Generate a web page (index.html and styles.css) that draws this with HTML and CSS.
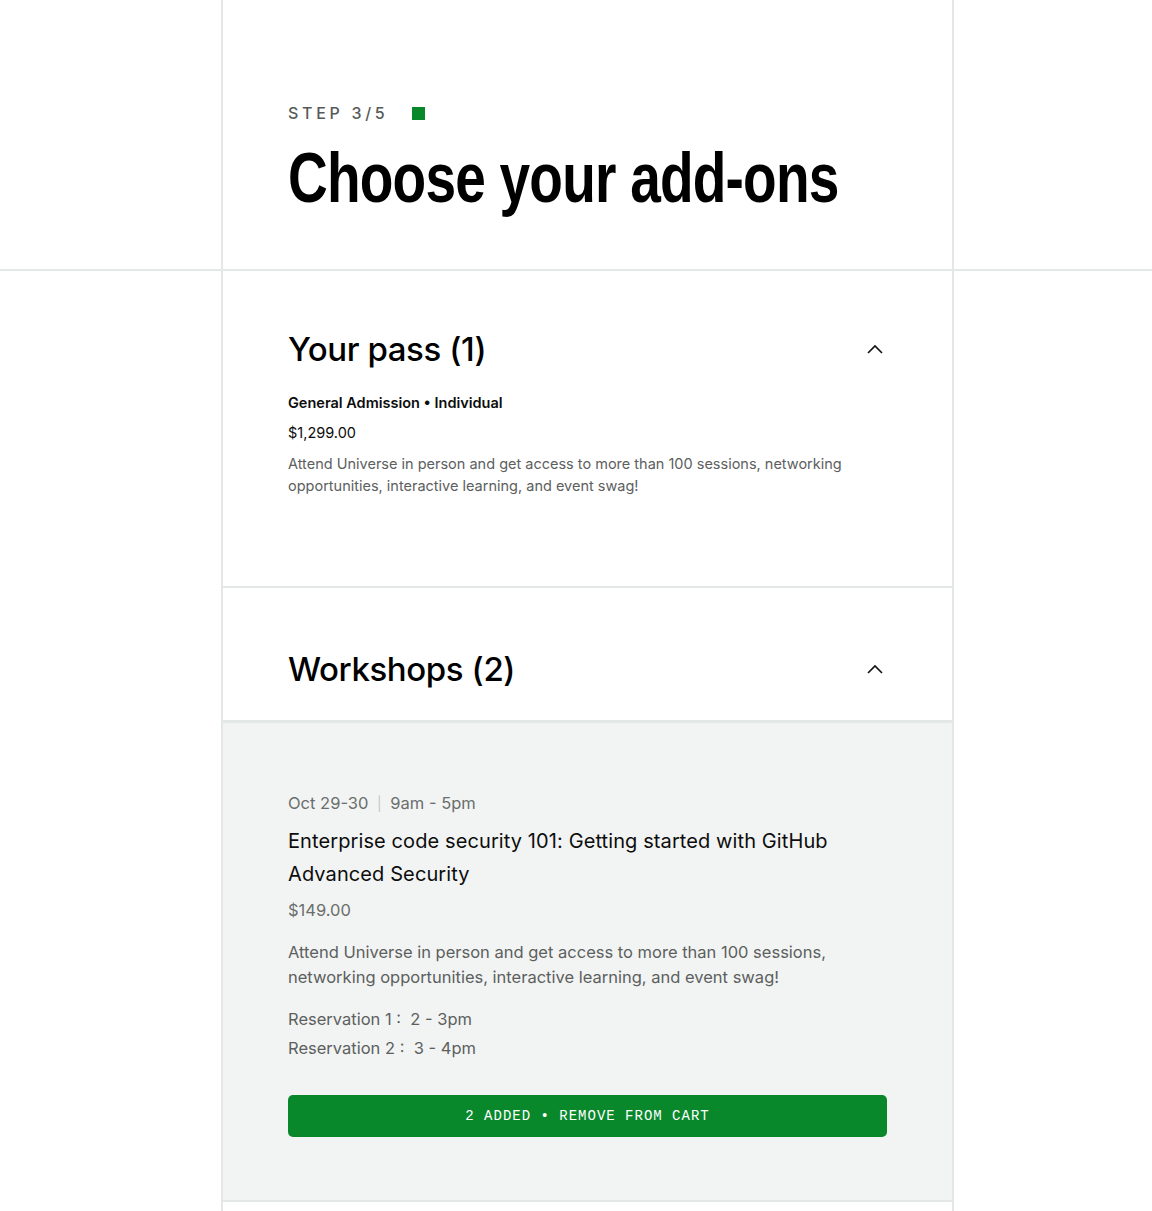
FILE: index.html
```html
<!DOCTYPE html>
<html lang="en">
<head>
<meta charset="utf-8">
<title>Choose your add-ons</title>
<link rel="stylesheet" href="styles.css">
</head>
<body>
<header class="top">
  <div class="col top-col">
    <div class="step"><span class="step-text">STEP 3/5</span><span class="step-dot"></span></div>
    <h1 class="title"><span class="title-inner">Choose your add-ons</span></h1>
  </div>
</header>
<main class="col main-col">
  <section class="panel pass">
    <div class="panel-head">
      <h2 class="panel-title">Your pass (1)</h2>
      <svg class="chev" width="16" height="10" viewBox="0 0 16 10"><path d="M1 9 L8 2 L15 9" fill="none" stroke="#111" stroke-width="1.6"/></svg>
    </div>
    <p class="pass-name">General Admission • Individual</p>
    <p class="pass-price">$1,299.00</p>
    <p class="pass-desc">Attend Universe in person and get access to more than 100 sessions, networking opportunities, interactive learning, and event swag!</p>
  </section>
  <section class="panel ws-head">
    <div class="panel-head">
      <h2 class="panel-title">Workshops (2)</h2>
      <svg class="chev" width="16" height="10" viewBox="0 0 16 10"><path d="M1 9 L8 2 L15 9" fill="none" stroke="#111" stroke-width="1.6"/></svg>
    </div>
  </section>
  <section class="ws-body">
    <p class="ws-date">Oct 29-30 <span class="sep">|</span> 9am - 5pm</p>
    <h3 class="ws-title">Enterprise code security 101: Getting started with GitHub Advanced Security</h3>
    <p class="ws-price">$149.00</p>
    <p class="ws-desc">Attend Universe in person and get access to more than 100 sessions, networking opportunities, interactive learning, and event swag!</p>
    <div class="res">
      <p>Reservation 1 :&nbsp; 2 - 3pm</p>
      <p>Reservation 2 :&nbsp; 3 - 4pm</p>
    </div>
    <button class="cart-btn">2 ADDED • REMOVE FROM CART</button>
  </section>
  <section class="panel tail"></section>
</main>
</body>
</html>
```
FILE: styles.css
```css
* { box-sizing: border-box; }
html, body { margin: 0; padding: 0; background: #fff; }
body {
  font-family: "Inter", "Noto Sans", sans-serif;
  color: #0d0d0d;
  height: 1211px;
  overflow: hidden;
}
p, h1, h2, h3 { margin: 0; }

.col {
  width: 733px;
  margin-left: 221px;
  border-left: 2px solid #e3e8e6;
  border-right: 2px solid #e3e8e6;
}
.top { border-bottom: 2px solid #e3e8e6; }
.top-col {
  height: 269px;
  padding: 102px 65px 0 65px;
}
.step {
  display: flex;
  align-items: center;
  gap: 24px;
  height: 22px;
}
.step-text {
  font-family: "Inter", sans-serif;
  font-size: 16px;
  letter-spacing: 3.7px;
  color: #555a58;
  font-weight: 500;
}
.step-dot { width: 13px; height: 13px; background: #08872b; }
.title {
  font-family: "Liberation Sans", "Arial", sans-serif;
  font-weight: 700;
  font-size: 70px;
  line-height: 80px;
  letter-spacing: -1px;
  margin-top: 14px;
  color: #000;
  white-space: nowrap;
}
.title-inner {
  display: inline-block;
  transform: scaleX(0.786);
  transform-origin: left center;
}

.main-col { min-height: 940px; }
.panel { padding: 0 65px; }
.panel-head {
  display: flex;
  align-items: center;
  justify-content: space-between;
  padding-right: 4px;
}
.panel-title {
  font-size: 33px;
  font-weight: 500;
  letter-spacing: -0.4px;
  line-height: 40px;
  color: #000;
}
.pass {
  height: 317px;
  padding-top: 58px;
  border-bottom: 2px solid #e3e8e6;
}
.pass-name { margin-top: 24px; font-size: 14.5px; font-weight: 600; line-height: 20px; }
.pass-price { margin-top: 10px; font-size: 14.5px; line-height: 20px; }
.pass-desc { margin-top: 10px; font-size: 14.5px; line-height: 22px; color: #5c605e; width: 570px; }

.ws-head {
  height: 135px;
  padding-top: 61px;
  border-bottom: 3px solid #e3e8e6;
}
.ws-body {
  background: #f2f4f3;
  padding: 68px 65px 0 65px;
  height: 479px;
  border-bottom: 2px solid #e3e8e6;
}
.ws-date { font-size: 16.5px; line-height: 24px; color: #6a6e6c; }
.ws-date .sep { color: #c4c8c6; padding: 0 4px; font-size: 14px; }
.ws-title { margin-top: 9px; font-size: 20px; font-weight: 400; line-height: 33px; color: #0d0d0d; letter-spacing: 0.1px; }
.ws-price { margin-top: 7px; font-size: 16.5px; line-height: 24px; color: #6a6e6c; }
.ws-desc { margin-top: 18px; font-size: 16.5px; line-height: 25px; color: #5c605e; }
.res { margin-top: 15px; font-size: 16.5px; line-height: 29px; color: #5c605e; }
.cart-btn {
  display: block;
  width: 599px;
  height: 42px;
  margin-top: 32px;
  border: 0;
  border-radius: 5px;
  background: #08872b;
  color: #fff;
  font-family: "Liberation Mono", "DejaVu Sans Mono", monospace;
  font-size: 14px;
  letter-spacing: 1px;
  cursor: pointer;
}
.tail { height: 20px; }
```
